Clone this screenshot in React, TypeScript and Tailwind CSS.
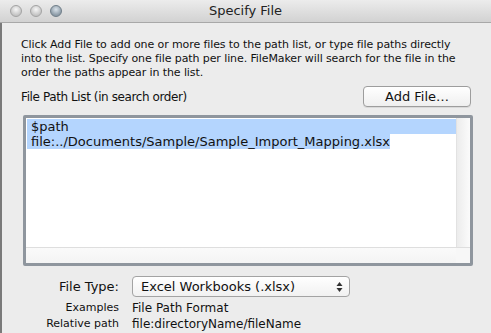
import React from "react";

const font = { fontFamily: '"Lucida Grande", "DejaVu Sans", sans-serif' };

const Light = ({ dark }: { dark?: boolean }) => (
  <div
    className={`w-[12px] h-[12px] rounded-full border ${
      dark
        ? "border-[#6f7d88] bg-[radial-gradient(circle_at_50%_35%,#d9e2ea,#8b9aa6_70%)]"
        : "border-[#a3a3a3] bg-[radial-gradient(circle_at_50%_35%,#f6f6f6,#c4c4c4_70%)]"
    }`}
  />
);

const App = () => {
  return (
    <div
      className="w-[491px] h-[333px] overflow-hidden bg-[#ececec] text-[#111] flex flex-col"
      style={font}
    >
      <div className="h-[23px] shrink-0 flex items-center relative bg-gradient-to-b from-[#ececec] to-[#d2d2d2] border-b border-[#a8a8a8]">
        <div className="flex gap-[8px] pl-[10px]">
          <Light />
          <Light />
          <Light dark />
        </div>
        <div className="absolute inset-0 flex items-center justify-center text-[13px] text-[#222]">
          Specify File
        </div>
      </div>
      <div className="flex flex-1">
        <div className="w-[2px] bg-[#7a7a7a]" />
        <div className="flex-1 pl-[19px] pr-[18px] pt-[15px]">
          <p className="text-[11px] leading-[14px] whitespace-nowrap tracking-[-0.1px]">
            Click Add File to add one or more files to the path list, or type file paths directly
            <br />
            into the list. Specify one file path per line. FileMaker will search for the file in the
            <br />
            order the paths appear in the list.
          </p>
          <div className="flex items-center justify-between mt-[6px] pr-[2px]">
            <span className="text-[12px] tracking-[-0.4px]">File Path List (in search order)</span>
            <button className="w-[108px] h-[21px] rounded-[4px] border border-[#9d9d9d] bg-gradient-to-b from-white to-[#efefef] text-[13px] shadow-[0_1px_0_rgba(0,0,0,0.08)]">
              Add File…
            </button>
          </div>
          <div className="mt-[8px] ml-[2px] w-[450px] h-[151px] rounded-[2px] border-[3px] border-[#8f969e] shadow-[inset_0_1px_2px_rgba(0,0,0,0.35)] bg-white flex flex-col">
            <div className="flex flex-1">
              <div className="flex-1 bg-white pt-[1px] pl-[1px] text-[13px] leading-[15px]">
                <div className="bg-[#b4d5fe] pl-[4px]">$path</div>
                <div className="bg-[#b4d5fe] pl-[4px] w-fit whitespace-nowrap">
                  file:../Documents/Sample/Sample_Import_Mapping.xlsx
                </div>
              </div>
              <div className="w-[14px] bg-gradient-to-r from-[#ececec] to-[#fbfbfb] border-l border-[#e2e2e2]" />
            </div>
            <div className="h-[16px] flex border-t border-[#dedede]">
              <div className="flex-1 bg-gradient-to-b from-[#fafafa] to-[#f4f4f4]" />
              <div className="w-[14px] bg-[#f7f7f7]" />
            </div>
          </div>
          <div className="grid grid-cols-[98px_1fr] gap-x-[13px] mt-[10px] items-center">
            <div className="text-right text-[13px]">File Type:</div>
            <div className="w-[218px] h-[21px] rounded-[4px] border border-[#a3a3a3] bg-gradient-to-b from-white to-[#f1f1f1] flex items-center justify-between pl-[8px] pr-[6px] text-[13px]">
              <span>Excel Workbooks (.xlsx)</span>
              <svg width="7" height="12" viewBox="0 0 7 12">
                <path d="M3.5 1 L6.5 5 L0.5 5 Z" fill="#333" />
                <path d="M3.5 11 L6.5 7 L0.5 7 Z" fill="#333" />
              </svg>
            </div>
            <div className="text-right text-[11px] leading-[16px] mt-[3px]">Examples</div>
            <div className="text-[12px] leading-[16px] mt-[3px]">File Path Format</div>
            <div className="text-right text-[11px] leading-[16px] whitespace-nowrap">Relative path</div>
            <div className="text-[12px] leading-[16px]">file:directoryName/fileName</div>
            <div className="text-right text-[11px] leading-[16px]">Full path</div>
            <div className="text-[12px] leading-[16px] whitespace-nowrap">file:/volumeName/directoryName/fileName</div>
          </div>
        </div>
      </div>
    </div>
  );
};

export default App;
